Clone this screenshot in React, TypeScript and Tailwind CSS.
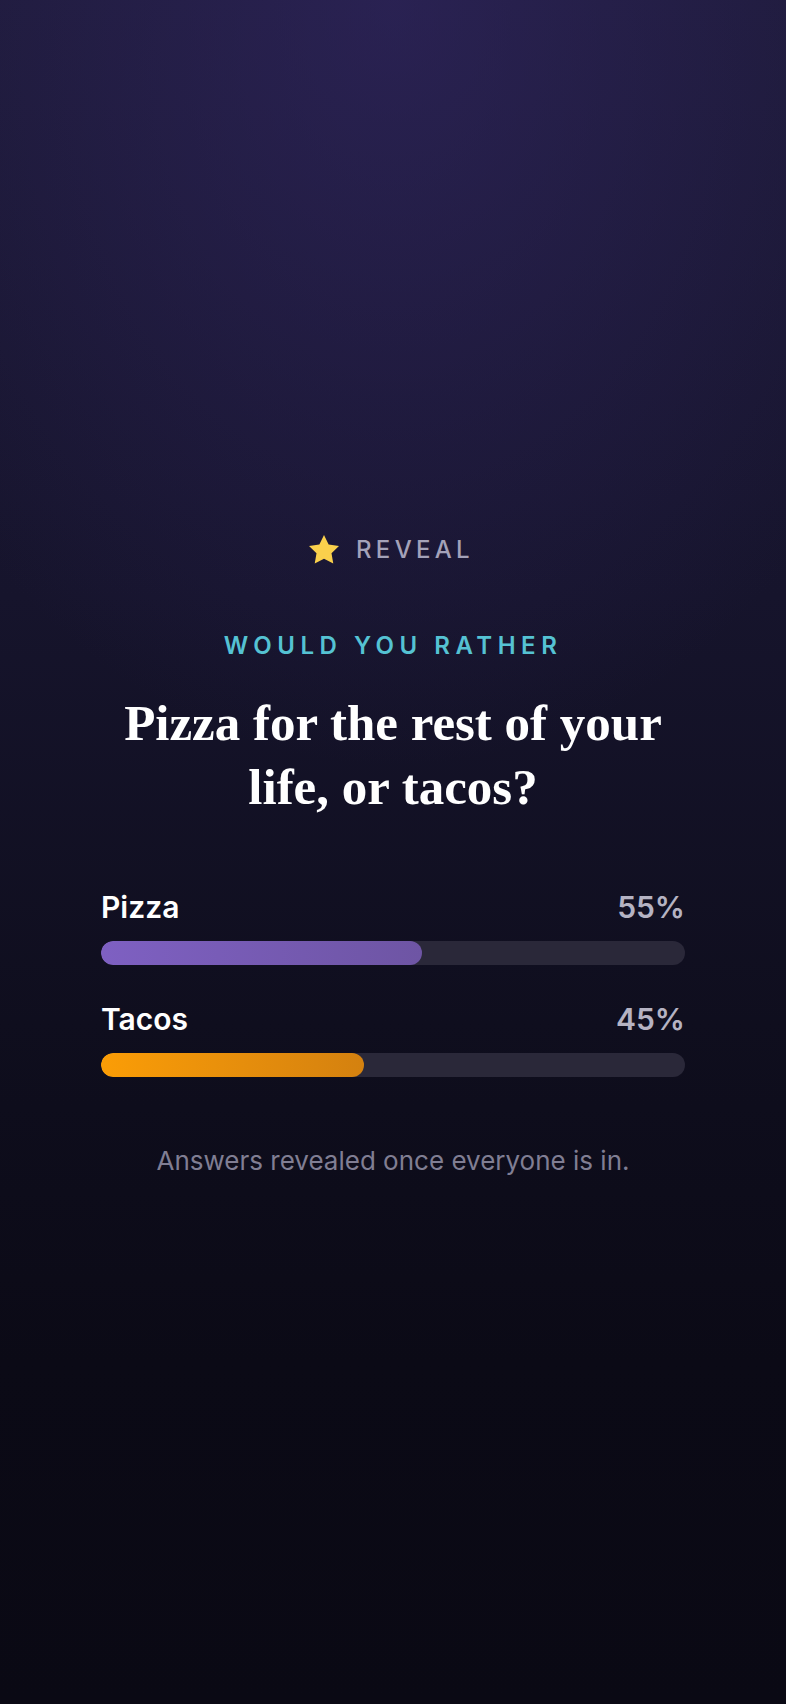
import React from "react";

interface OptionProps {
  label: string;
  percent: number;
  barClass: string;
}

const options: OptionProps[] = [
  {
    label: "Pizza",
    percent: 55,
    barClass: "bg-linear-to-r from-[#7e60c2] to-[#6e55a4]",
  },
  {
    label: "Tacos",
    percent: 45,
    barClass: "bg-linear-to-r from-[#fb9d06] to-[#d4810f]",
  },
];

const StarIcon = () => (
  <svg width="36" height="36" viewBox="0 0 24 24" className="shrink-0">
    <polygon
      points="12,2 15.09,8.26 22,9.27 17,14.14 18.18,21.02 12,17.77 5.82,21.02 7,14.14 2,9.27 8.91,8.26"
      fill="#fad04c"
    />
  </svg>
);

const ResultRow = ({ label, percent, barClass }: OptionProps) => {
  return (
    <div className="flex flex-col">
      <div className="flex flex-row justify-between items-center h-9">
        <span className="text-[30px] leading-9 font-semibold text-white">
          {label}
        </span>
        <span className="text-[30px] leading-9 font-semibold text-[#b5b3c3]">
          {percent}%
        </span>
      </div>
      <div className="mt-4 h-6 w-full rounded-full bg-[#2a2839] overflow-hidden">
        <div
          className={`h-full rounded-full ${barClass}`}
          style={{ width: `${percent}%` }}
        />
      </div>
    </div>
  );
};

const App = () => {
  return (
    <div
      className="min-h-screen w-full flex flex-col items-center justify-center pt-[6px] bg-[radial-gradient(ellipse_75%_45%_at_50%_0%,rgba(52,40,104,0.55),transparent),linear-gradient(to_bottom,#1d1a38_0%,#16142c_35%,#0f0e1e_60%,#0b0a16_80%,#0a0914_100%)]"
      style={{ fontFamily: "Inter, 'Noto Sans', sans-serif" }}
    >
      <div className="w-[584px] flex flex-col items-center">
        {/* round label */}
        <div className="flex flex-row items-center gap-[14px] h-8 -translate-x-[3px]">
          <StarIcon />
          <span className="text-[24px] leading-8 font-medium tracking-[0.18em] text-[#a4a2b9]">
            REVEAL
          </span>
        </div>

        <div className="mt-[66px] text-[24px] leading-7 font-semibold tracking-[0.23em] text-[#55c2d3]">
          WOULD YOU RATHER
        </div>

        <h1
          className="mt-[31px] text-center text-[51px] leading-[64px] font-bold text-white w-[570px]"
          style={{ fontFamily: "'Liberation Serif', 'DejaVu Serif', serif" }}
        >
          Pizza for the rest of your life, or tacos?
        </h1>

        <div className="mt-[70px] w-full flex flex-col gap-9">
          {options.map((opt) => (
            <ResultRow key={opt.label} {...opt} />
          ))}
        </div>

        <p className="mt-[68px] text-[26px] leading-8 text-[#807e93]">
          Answers revealed once everyone is in.
        </p>
      </div>
    </div>
  );
};

export default App;
